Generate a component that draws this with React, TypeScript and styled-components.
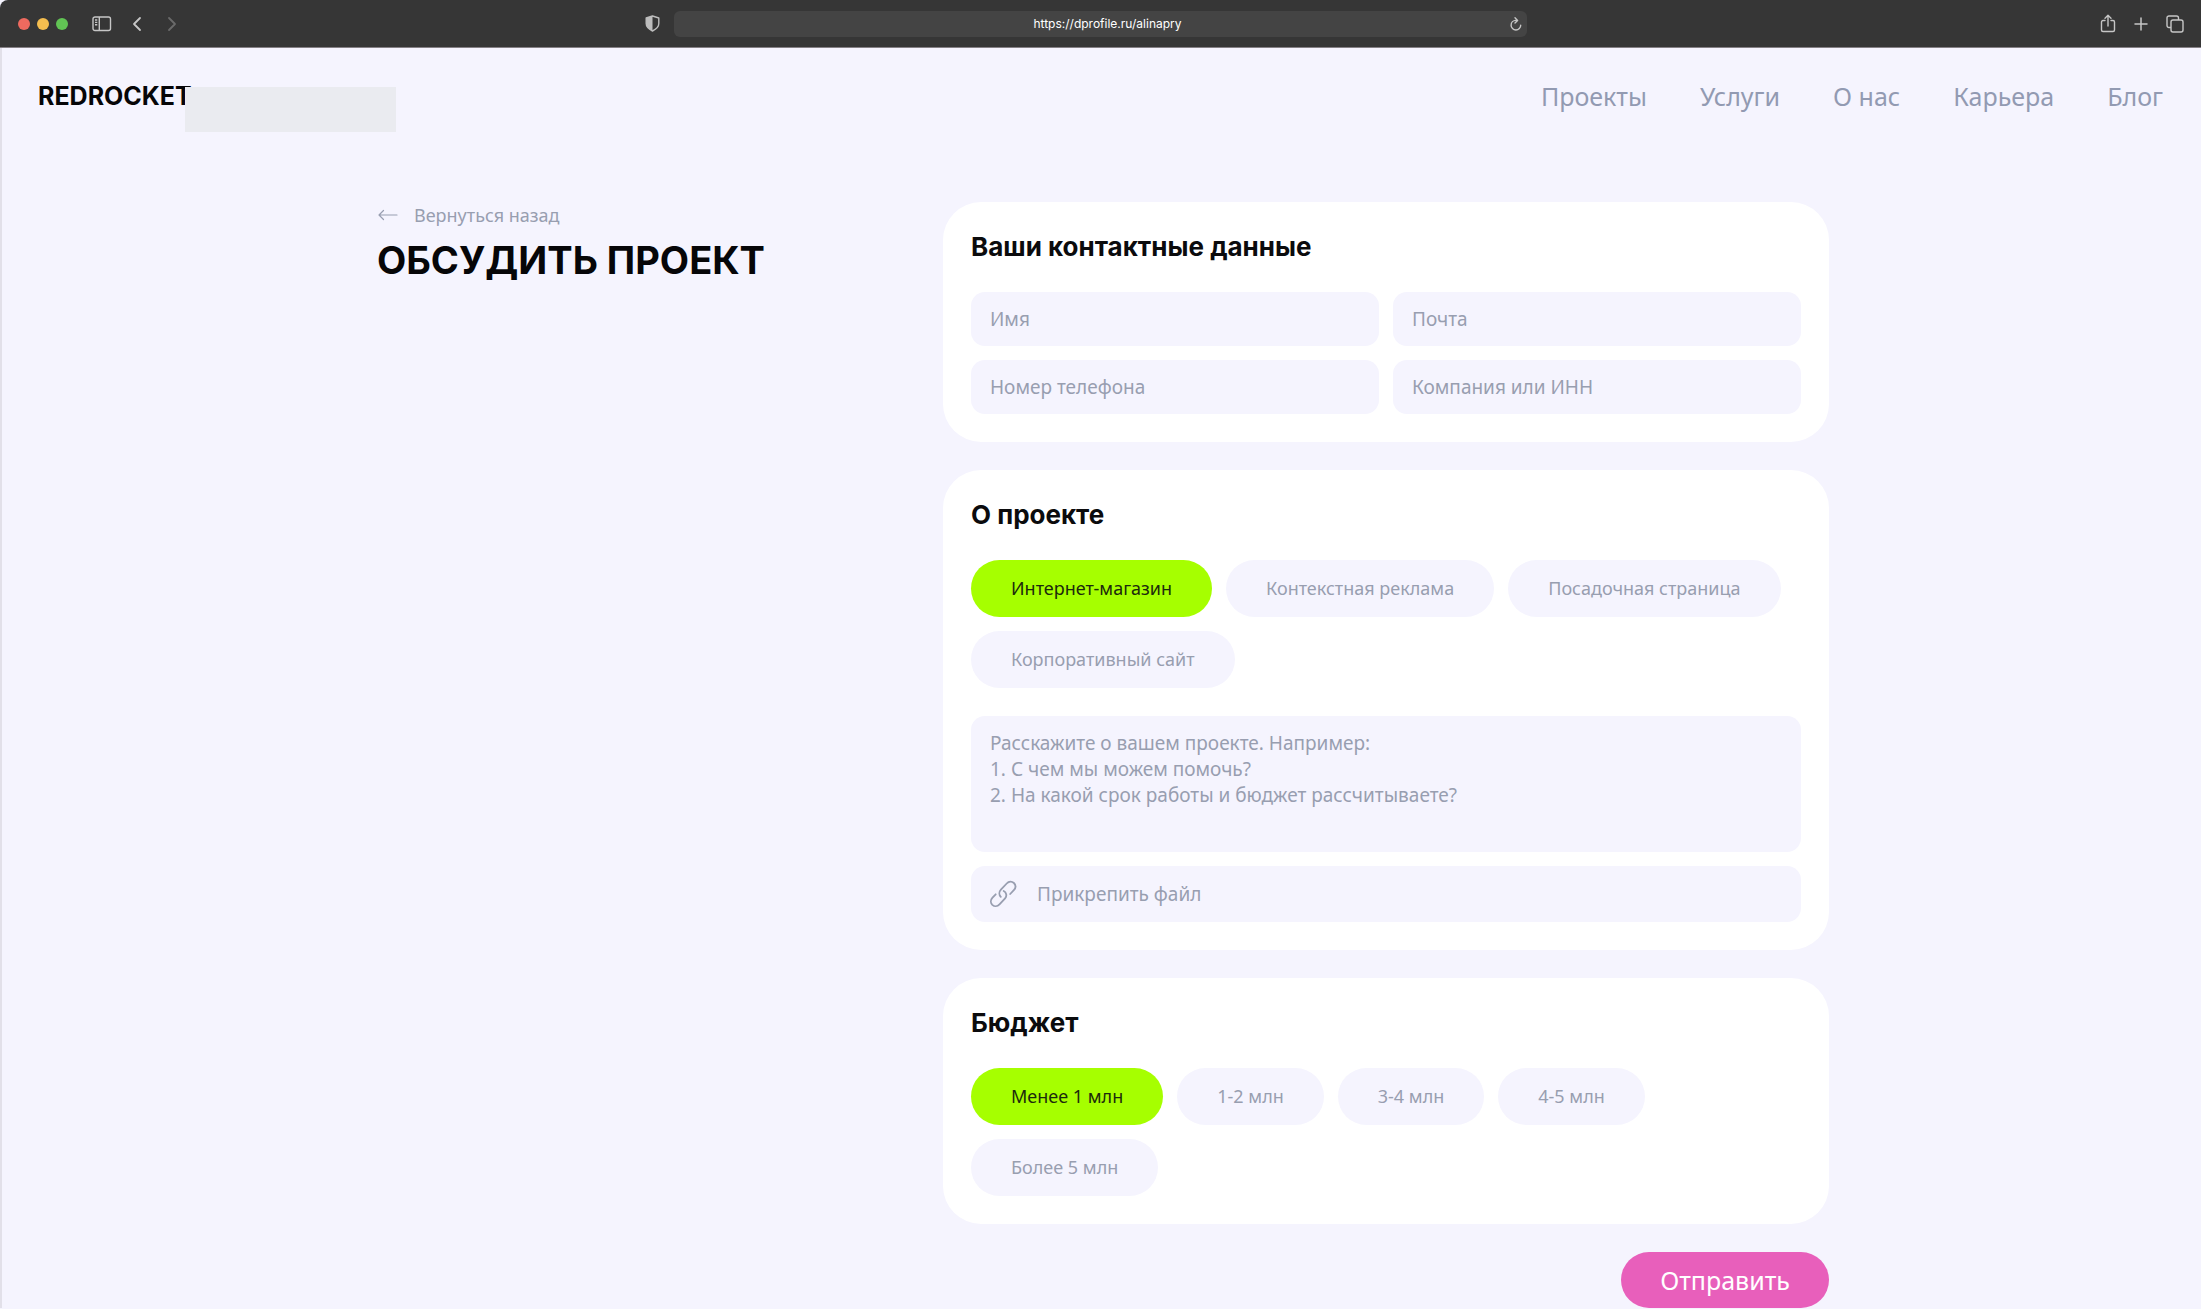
import React, { useState } from "react";
import styled, { createGlobalStyle } from "styled-components";

const display = `Inter, "Liberation Sans", sans-serif`;
const text = `"Noto Sans", "Open Sans", sans-serif`;

const color = {
  page: "#f5f4fe",
  field: "#f5f4fe",
  muted: "#989eb0",
  nav: "#929ab2",
  ink: "#060608",
  lime: "#a6ff00",
  pink: "#e85fbb",
};

const GlobalStyle = createGlobalStyle`
  *, *::before, *::after { box-sizing: border-box; }
  body { margin: 0; background: ${color.page}; font-family: ${text}; color: ${color.ink}; }
  button, input, textarea { font: inherit; }
`;

const Window = styled.div`
  min-height: 100vh;
  background: ${color.page};
`;

/* Browser toolbar */

const Toolbar = styled.div`
  display: grid;
  grid-template-columns: 1fr 911px 1fr;
  align-items: center;
  height: 48px;
  background: #363636;
  border-bottom: 1px solid #858085;
  border-top-left-radius: 8px;
`;

const ToolbarSide = styled.div<{ $end?: boolean }>`
  display: flex;
  align-items: center;
  justify-content: ${(p) => (p.$end ? "flex-end" : "flex-start")};
  gap: ${(p) => (p.$end ? "17px" : "15px")};
  padding: 0 17px 0 18px;
`;

const Lights = styled.div`
  display: flex;
  gap: 7px;
  margin-right: 9px;
`;

const Light = styled.span<{ $color: string }>`
  width: 12px;
  height: 12px;
  border-radius: 50%;
  background: ${(p) => p.$color};
`;

const IconButton = styled.button<{ $dim?: boolean }>`
  display: flex;
  padding: 0;
  border: 0;
  background: none;
  color: ${(p) => (p.$dim ? "#6a6a6a" : "#c6c6c6")};
`;

const AddressGroup = styled.div`
  display: flex;
  align-items: center;
  gap: 14px;
  padding-right: 29px;
`;

const AddressBar = styled.div`
  display: flex;
  flex: 1;
  align-items: center;
  height: 26px;
  padding: 0 4px 0 32px;
  border-radius: 6px;
  background: #444444;
`;

const Address = styled.input`
  flex: 1;
  min-width: 0;
  padding: 0;
  border: 0;
  outline: 0;
  background: none;
  color: #ffffff;
  font-family: ${display};
  font-size: 12px;
  text-align: center;
`;

/* Site */

const Site = styled.div`
  border-left: 2px solid #e2e0e9;
`;

const Header = styled.header`
  display: flex;
  align-items: center;
  justify-content: space-between;
  padding: 30px 38px 0 36px;
`;

const Logo = styled.a`
  position: relative;
  color: ${color.ink};
  font-family: ${display};
  font-size: 25px;
  font-weight: 700;
  line-height: 36px;
  text-decoration: none;
`;

const LogoPlate = styled.span`
  position: absolute;
  top: 9px;
  left: 147px;
  width: 211px;
  height: 45px;
  background: #eaebf0;
`;

const Nav = styled.nav`
  display: flex;
  gap: 53px;
`;

const NavLink = styled.a`
  color: ${color.nav};
  font-size: 25px;
  line-height: 36px;
  text-decoration: none;
`;

const Main = styled.main`
  display: grid;
  grid-template-columns: minmax(0, 1fr) minmax(0, 886px);
  max-width: 1455px;
  margin: 0 auto;
  padding: 88px 0 0 3px;
`;

const BackLink = styled.a`
  display: flex;
  align-items: center;
  gap: 16px;
  color: ${color.muted};
  font-size: 18px;
  line-height: 26px;
  text-decoration: none;
`;

const Title = styled.h1`
  margin: 10px 0 0;
  font-family: ${display};
  font-size: 38px;
  font-weight: 700;
  line-height: 44px;
`;

const Form = styled.form`
  display: flex;
  flex-direction: column;
  gap: 28px;
`;

const Card = styled.section`
  display: flex;
  flex-direction: column;
  gap: 28px;
  padding: 28px;
  border-radius: 38px;
  background: #ffffff;
`;

const CardTitle = styled.h2`
  margin: 0;
  color: #0b0b0d;
  font-family: ${display};
  font-size: 26px;
  font-weight: 700;
  line-height: 34px;
`;

const Fields = styled.div<{ $columns: number }>`
  display: grid;
  grid-template-columns: repeat(${(p) => p.$columns}, minmax(0, 1fr));
  gap: 14px;
`;

const Field = styled.input`
  width: 100%;
  height: 54px;
  padding: 0 19px;
  border: 0;
  border-radius: 14px;
  outline: 0;
  background: ${color.field};
  color: ${color.ink};
  font-size: 19px;
  &::placeholder { color: ${color.muted}; opacity: 1; }
`;

const Message = styled.textarea`
  display: block;
  width: 100%;
  height: 136px;
  padding: 14px 19px;
  border: 0;
  border-radius: 14px;
  outline: 0;
  resize: none;
  background: ${color.field};
  color: ${color.ink};
  font-size: 19px;
  line-height: 26px;
  &::placeholder { color: ${color.muted}; opacity: 1; }
`;

const Attach = styled.label`
  display: flex;
  align-items: center;
  gap: 20px;
  height: 56px;
  padding: 0 19px;
  border-radius: 14px;
  background: ${color.field};
  color: ${color.muted};
  font-size: 19px;
  cursor: pointer;
`;

const HiddenInput = styled.input`
  position: absolute;
  width: 1px;
  height: 1px;
  opacity: 0;
  pointer-events: none;
`;

const ChipRow = styled.div`
  display: flex;
  flex-wrap: wrap;
  gap: 14px;
`;

const Chip = styled.label<{ $active: boolean }>`
  position: relative;
  padding: 0 40px;
  border-radius: 29px;
  background: ${(p) => (p.$active ? color.lime : color.field)};
  color: ${(p) => (p.$active ? "#1c2a0c" : color.muted)};
  font-size: 18px;
  line-height: 57px;
  cursor: pointer;
`;

const Submit = styled.button`
  align-self: flex-end;
  height: 56px;
  padding: 0 39px;
  border: 0;
  border-radius: 28px;
  background: ${color.pink};
  color: #ffffff;
  font-size: 25px;
  line-height: 36px;
`;

const SidebarIcon = () => (
  <svg width="20" height="16" viewBox="0 0 20 16" fill="none" stroke="currentColor" strokeWidth="1.4">
    <rect x="1" y="1" width="17.5" height="13.5" rx="2" />
    <path d="M7.3 1v13.5M3 4h2.3M3 6.4h2.3M3 8.8h2.3" />
  </svg>
);

const ChevronIcon = ({ forward }: { forward?: boolean }) => (
  <svg width="20" height="16" viewBox="0 0 20 16" fill="none" stroke="currentColor" strokeWidth="1.8" strokeLinecap="round" strokeLinejoin="round">
    <path d={forward ? "M7 2l6 6-6 6" : "M13 2L7 8l6 6"} />
  </svg>
);

const ShieldIcon = () => (
  <svg width="15" height="17" viewBox="0 0 15 17">
    <path d="M7.500 1L13.800 3v5.600c0 3.400-2.600 5.600-6.300 7.400C3.800 14.200 1.200 12 1.200 8.600V3z" fill="none" stroke="#bdbdbd" strokeWidth="1.4" strokeLinejoin="round" />
    <path d="M7.5 1v15C3.800 14.200 1.200 12 1.200 8.600V3z" fill="#bdbdbd" />
  </svg>
);

const ReloadIcon = () => (
  <svg width="14" height="16" viewBox="0 0 14 16" fill="none" stroke="currentColor" strokeWidth="1.4" strokeLinecap="round" strokeLinejoin="round">
    <path d="M11.700 9.200a4.800 4.800 0 1 1-4.800-4.800h1.300M6 1.800l2.600 2.600L6 7" />
  </svg>
);

const ShareIcon = () => (
  <svg width="16" height="19" viewBox="0 0 16 19" fill="none" stroke="currentColor" strokeWidth="1.4" strokeLinecap="round" strokeLinejoin="round">
    <path d="M5 6.500H3A1.500 1.500 0 0 0 1.500 8v8A1.500 1.500 0 0 0 3 17.500h10a1.500 1.500 0 0 0 1.500-1.500V8A1.500 1.500 0 0 0 13 6.500h-2M8 12V1.500M5 4.200l3-2.900 3 2.900" />
  </svg>
);

const PlusIcon = () => (
  <svg width="16" height="16" viewBox="0 0 16 16" stroke="currentColor" strokeWidth="1.5" strokeLinecap="round">
    <path d="M8 2v12M2 8h12" />
  </svg>
);

const TabsIcon = () => (
  <svg width="18" height="18" viewBox="0 0 18 18" fill="none" stroke="currentColor" strokeWidth="1.4">
    <rect x="5" y="5" width="12" height="12" rx="2" />
    <path d="M5 12.500H3a2 2 0 0 1-2-2V3a2 2 0 0 1 2-2h7.500a2 2 0 0 1 2 2v2" />
  </svg>
);

const ArrowIcon = () => (
  <svg width="21" height="12" viewBox="0 0 21 12" fill="none" stroke="currentColor" strokeWidth="1.2" strokeLinecap="round" strokeLinejoin="round">
    <path d="M2 6h18M6.500 1.500L2 6l4.500 4.500" />
  </svg>
);

const LinkIcon = () => (
  <svg width="27" height="28" viewBox="0 0 27 28" fill="none" stroke="currentColor" strokeWidth="1.8" strokeLinecap="round">
    <path d="M10.800 16.800c-2-2.100-1.800-5.100.1-7.100l5.800-6.200c2.200-2.400 5.200-2.300 7.200-.5 2 2 2 4.900-.1 7.200l-3.600 3.800" />
    <path d="M13.700 11c2.600 1.300 3.600 4.900 1.400 7.300l-5.600 6.100c-2.200 2.300-5.200 2.200-7.200.4-2-1.900-1.800-4.900.2-7.100l3.200-3.400" />
  </svg>
);

const projectTypes = ["Интернет-магазин", "Контекстная реклама", "Посадочная страница", "Корпоративный сайт"];
const budgets = ["Менее 1 млн", "1-2 млн", "3-4 млн", "4-5 млн", "Более 5 млн"];
const contacts = ["Имя", "Почта", "Номер телефона", "Компания или ИНН"];
const links = ["Проекты", "Услуги", "О нас", "Карьера", "Блог"];
const messageHint =
  "Расскажите о вашем проекте. Например:\n1. С чем мы можем помочь?\n2. На какой срок работы и бюджет рассчитываете?";

function Chips({ name, options }: { name: string; options: string[] }) {
  const [value, setValue] = useState(options[0]);
  return (
    <ChipRow role="radiogroup">
      {options.map((option) => (
        <Chip key={option} $active={option === value}>
          <HiddenInput type="radio" name={name} checked={option === value} onChange={() => setValue(option)} />
          {option}
        </Chip>
      ))}
    </ChipRow>
  );
}

export default function App() {
  return (
    <Window>
      <GlobalStyle />
      <Toolbar>
        <ToolbarSide>
          <Lights>
            <Light $color="#ee6a5f" />
            <Light $color="#f5be4f" />
            <Light $color="#61c454" />
          </Lights>
          <IconButton type="button"><SidebarIcon /></IconButton>
          <IconButton type="button"><ChevronIcon /></IconButton>
          <IconButton type="button" $dim><ChevronIcon forward /></IconButton>
        </ToolbarSide>
        <AddressGroup>
          <ShieldIcon />
          <AddressBar>
            <Address defaultValue="https://dprofile.ru/alinapry" />
            <IconButton type="button"><ReloadIcon /></IconButton>
          </AddressBar>
        </AddressGroup>
        <ToolbarSide $end>
          <IconButton type="button"><ShareIcon /></IconButton>
          <IconButton type="button"><PlusIcon /></IconButton>
          <IconButton type="button"><TabsIcon /></IconButton>
        </ToolbarSide>
      </Toolbar>
      <Site>
        <Header>
          <Logo href="#">
            REDROCKET
            <LogoPlate />
          </Logo>
          <Nav>
            {links.map((link) => (
              <NavLink key={link} href="#">{link}</NavLink>
            ))}
          </Nav>
        </Header>
        <Main>
          <div>
            <BackLink href="#"><ArrowIcon />Вернуться назад</BackLink>
            <Title>ОБСУДИТЬ ПРОЕКТ</Title>
          </div>
          <Form onSubmit={(event) => event.preventDefault()}>
            <Card>
              <CardTitle>Ваши контактные данные</CardTitle>
              <Fields $columns={2}>
                {contacts.map((label) => (
                  <Field key={label} placeholder={label} aria-label={label} />
                ))}
              </Fields>
            </Card>
            <Card>
              <CardTitle>О проекте</CardTitle>
              <Chips name="project" options={projectTypes} />
              <Fields $columns={1}>
                <Message placeholder={messageHint} aria-label="О проекте" />
                <Attach>
                  <HiddenInput type="file" />
                  <LinkIcon />
                  Прикрепить файл
                </Attach>
              </Fields>
            </Card>
            <Card>
              <CardTitle>Бюджет</CardTitle>
              <Chips name="budget" options={budgets} />
            </Card>
            <Submit type="submit">Отправить</Submit>
          </Form>
        </Main>
      </Site>
    </Window>
  );
}
